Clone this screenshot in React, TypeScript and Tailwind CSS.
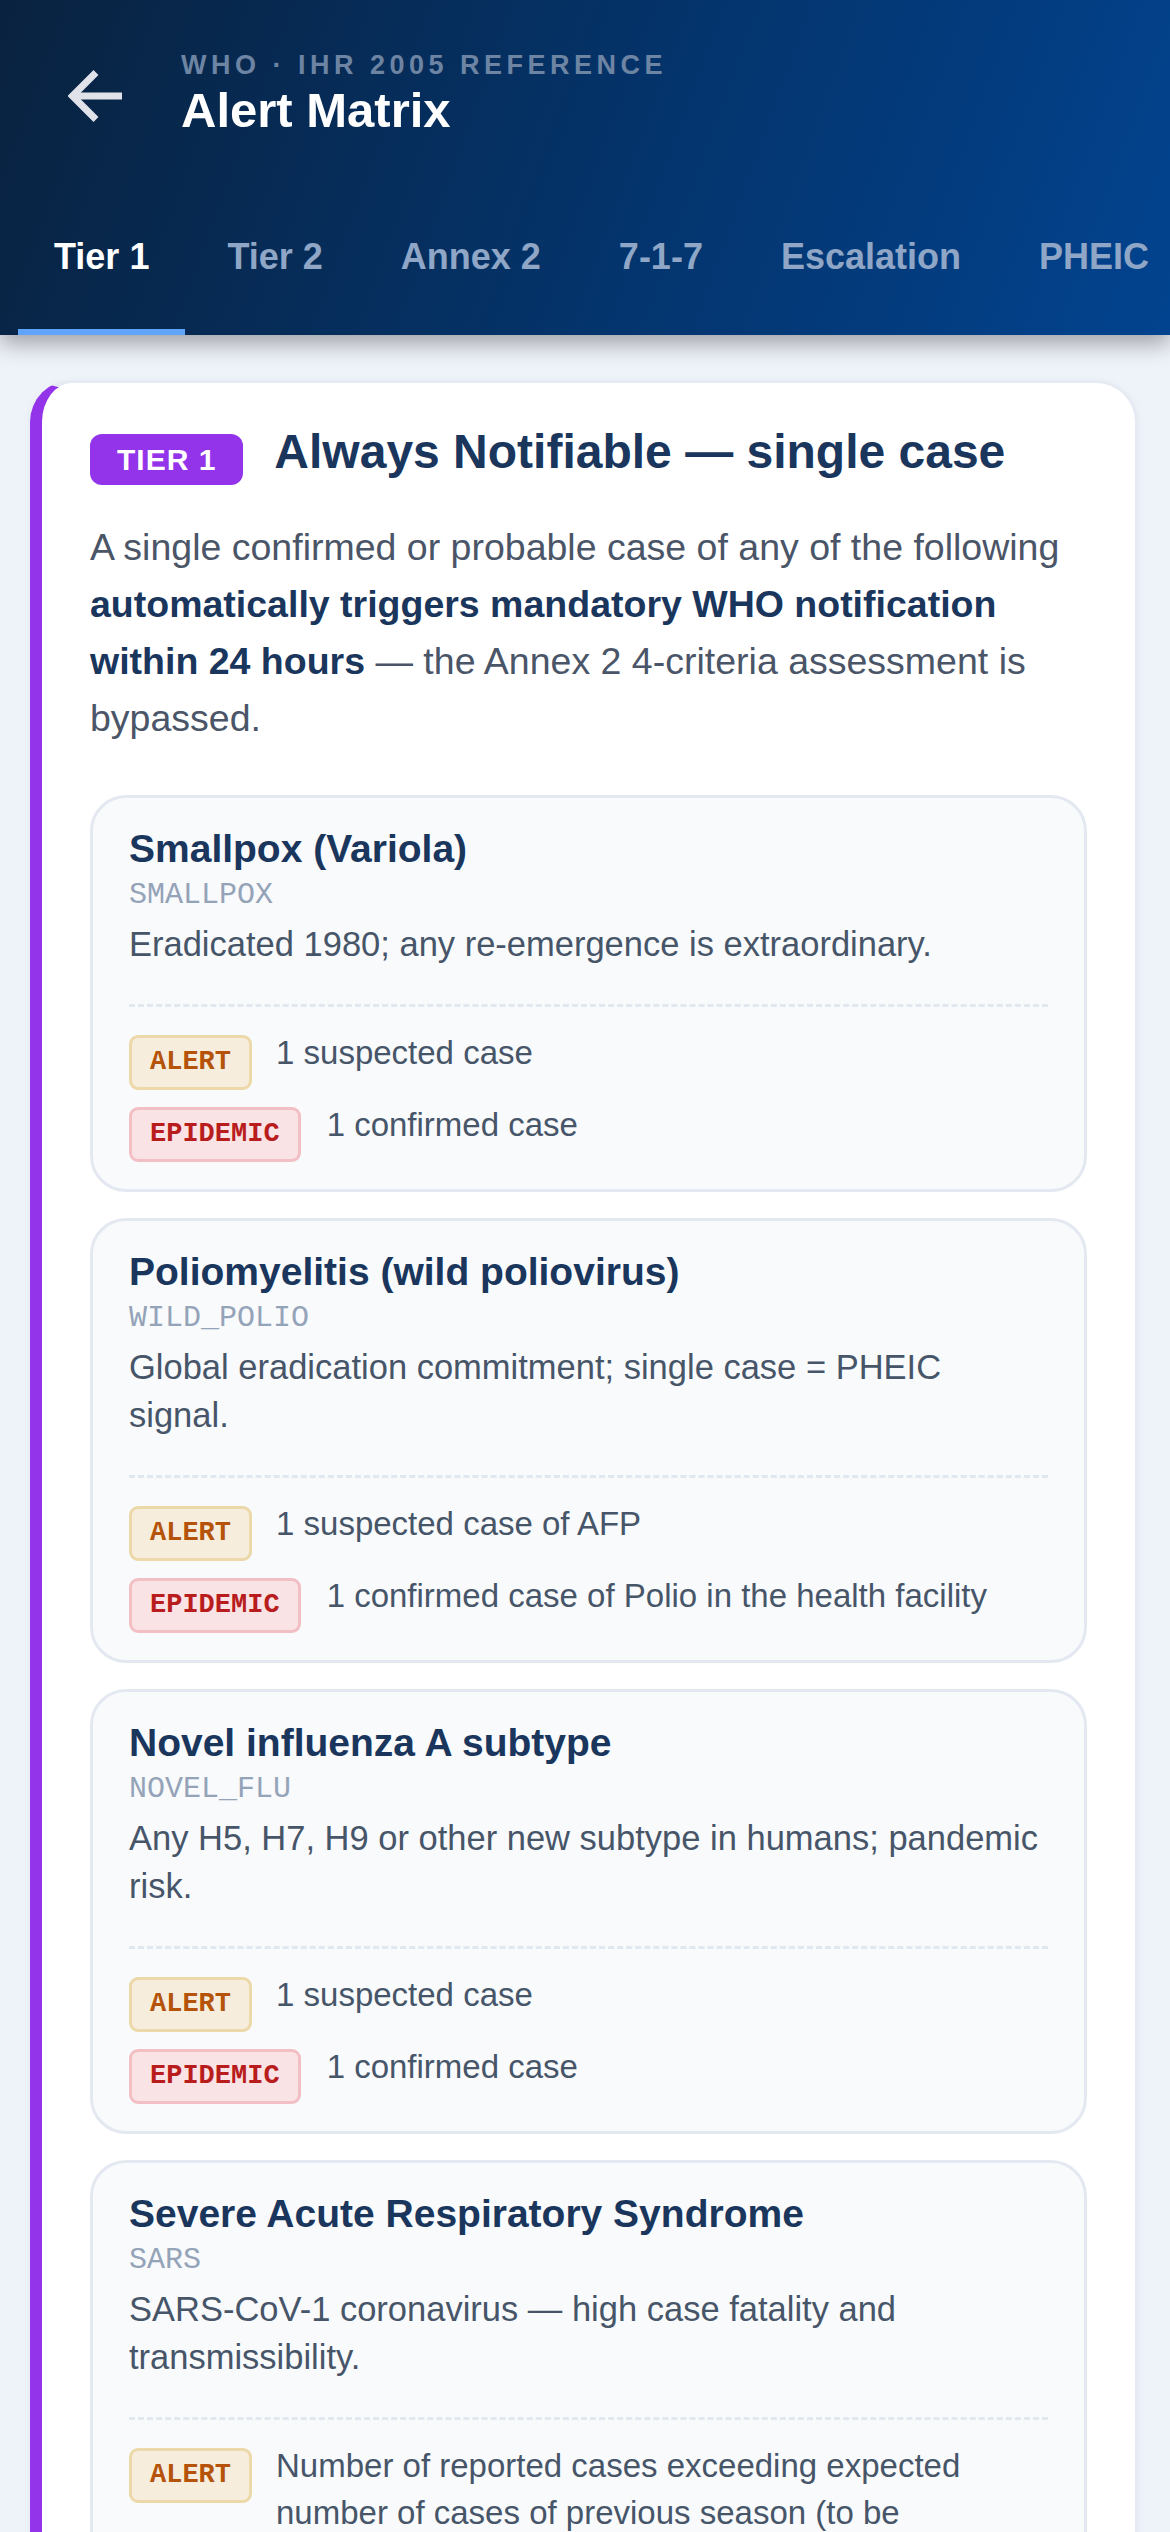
import React from "react";

type Disease = {
  name: string;
  code: string;
  desc: string;
  alert: string;
  epidemic: string;
};

const diseases: Disease[] = [
  {
    name: "Smallpox (Variola)",
    code: "SMALLPOX",
    desc: "Eradicated 1980; any re-emergence is extraordinary.",
    alert: "1 suspected case",
    epidemic: "1 confirmed case",
  },
  {
    name: "Poliomyelitis (wild poliovirus)",
    code: "WILD_POLIO",
    desc: "Global eradication commitment; single case = PHEIC signal.",
    alert: "1 suspected case of AFP",
    epidemic: "1 confirmed case of Polio in the health facility",
  },
  {
    name: "Novel influenza A subtype",
    code: "NOVEL_FLU",
    desc: "Any H5, H7, H9 or other new subtype in humans; pandemic risk.",
    alert: "1 suspected case",
    epidemic: "1 confirmed case",
  },
  {
    name: "Severe Acute Respiratory Syndrome",
    code: "SARS",
    desc: "SARS-CoV-1 coronavirus — high case fatality and transmissibility.",
    alert:
      "Number of reported cases exceeding expected number of cases of previous season (to be determined by the country)",
    epidemic: "1 confirmed case",
  },
];

const tabs = ["Tier 1", "Tier 2", "Annex 2", "7-1-7", "Escalation", "PHEIC"];

const sans = "font-['Liberation_Sans',Arial,sans-serif]";
const mono = "font-['Liberation_Mono','Courier_New',monospace]";

function Badge({ kind }: { kind: "alert" | "epidemic" }) {
  if (kind === "alert") {
    return (
      <span
        className={`${mono} mt-[6px] shrink-0 rounded-[9px] border-[3px] border-[#ecd8a8] bg-[#f6eddd] px-[18px] py-[9px] text-[27px] font-bold leading-[31px] text-[#b45309]`}
      >
        ALERT
      </span>
    );
  }
  return (
    <span
      className={`${mono} mt-[6px] shrink-0 rounded-[9px] border-[3px] border-[#f2c0c4] bg-[#f9e3e5] px-[18px] py-[9px] text-[27px] font-bold leading-[31px] text-[#b91c1c]`}
    >
      EPIDEMIC
    </span>
  );
}

function DiseaseCard({ d }: { d: Disease }) {
  return (
    <div className="rounded-[36px] border-[3px] border-[#e4e9f1] bg-[#f8fafc] pb-[27px] pl-[36px] pr-[41px] pt-[27px]">
      <div className="text-[39px] font-bold leading-[48px] text-[#1a365d]">{d.name}</div>
      <div className={`${mono} text-[30px] leading-[45px] text-[#94a3b8]`}>{d.code}</div>
      <div className="mt-[2px] text-[34.5px] leading-[48px] text-[#475569]">{d.desc}</div>
      <div className="-mr-[5px] mt-[36px] border-t-[3px] border-dashed border-[#e2e8f0] pr-[5px] pt-[22px]">
        <div className="flex flex-col gap-[11px]">
          <div className="flex items-start gap-[24px]">
            <Badge kind="alert" />
            <span className="text-[33px] leading-[47px] text-[#475569]">{d.alert}</span>
          </div>
          <div className="flex items-start gap-[26px]">
            <Badge kind="epidemic" />
            <span className="text-[33px] leading-[47px] text-[#475569]">{d.epidemic}</span>
          </div>
        </div>
      </div>
    </div>
  );
}

export default function App() {
  return (
    <div className={`${sans} min-h-screen w-full overflow-hidden bg-[#eef2f9]`}>
      {/* Header */}
      <header className="relative z-10 bg-[linear-gradient(110deg,#09223f_0%,#04346c_55%,#02438f_100%)] pt-[49px] shadow-[0_8px_22px_rgba(0,0,0,0.35)]">
        <div className="flex items-center">
          <div className="ml-[68px] mt-[5px] flex h-[56px] w-[56px] shrink-0 items-center justify-center">
            <svg width="56" height="56" viewBox="0 0 56 56" fill="none">
              <path d="M4 28 H54" stroke="#dfe3e9" strokeWidth="7" />
              <path d="M28 4.5 L4.5 28 L28 51.5" stroke="#dfe3e9" strokeWidth="7" strokeLinejoin="miter" />
            </svg>
          </div>
          <div className="ml-[57px] flex flex-col">
            <div className="text-[27px] font-bold leading-[32px] tracking-[4.5px] text-[#6d84a3]">
              WHO · IHR 2005 REFERENCE
            </div>
            <div className="mt-[1px] text-[49px] font-bold leading-[56px] text-white">Alert Matrix</div>
          </div>
        </div>
        <nav className="mt-[47px] flex gap-[6px] overflow-hidden whitespace-nowrap pl-[18px]">
          {tabs.map((t, i) => (
            <div
              key={t}
              className={
                i === 0
                  ? "shrink-0 border-b-[6px] border-[#60a5fa] px-[36px] pb-[50px] pt-[50px] text-[36px] font-bold leading-[44px] text-white"
                  : "shrink-0 border-b-[6px] border-transparent px-[36px] pb-[50px] pt-[50px] text-[36px] font-bold leading-[44px] text-[#8fa6c6]"
              }
            >
              {t}
            </div>
          ))}
        </nav>
      </header>

      {/* Content */}
      <main className="pb-[60px] pl-[30px] pr-[32px] pt-[45px]">
        <section className="rounded-[42px] border-[3px] border-l-[12px] border-[#e6ebf3] border-l-[#9333ea] bg-white pb-[48px] pl-[48px] pr-[48px] pt-[40px] shadow-[0_3px_10px_rgba(30,41,59,0.05)]">
          <div className="flex items-start gap-[31px]">
            <span className="mt-[11px] flex h-[51px] shrink-0 items-center rounded-[12px] bg-[#9333ea] px-[27px] text-[30px] font-bold tracking-[1px] text-white">
              TIER 1
            </span>
            <h2 className="text-[48px] font-bold leading-[58px] text-[#1a365d]">Always Notifiable — single case</h2>
          </div>
          <p className="mt-[34px] text-[37.5px] leading-[57px] text-[#4a5568]">
            A single confirmed or probable case of any of the following{" "}
            <strong className="font-bold text-[#1a365d]">automatically triggers mandatory WHO notification within 24 hours</strong>{" "}
            — the Annex 2 4-criteria assessment is bypassed.
          </p>
          <div className="mt-[48px] flex flex-col gap-[26px]">
            {diseases.map((d) => (
              <DiseaseCard key={d.code} d={d} />
            ))}
          </div>
        </section>
      </main>
    </div>
  );
}
